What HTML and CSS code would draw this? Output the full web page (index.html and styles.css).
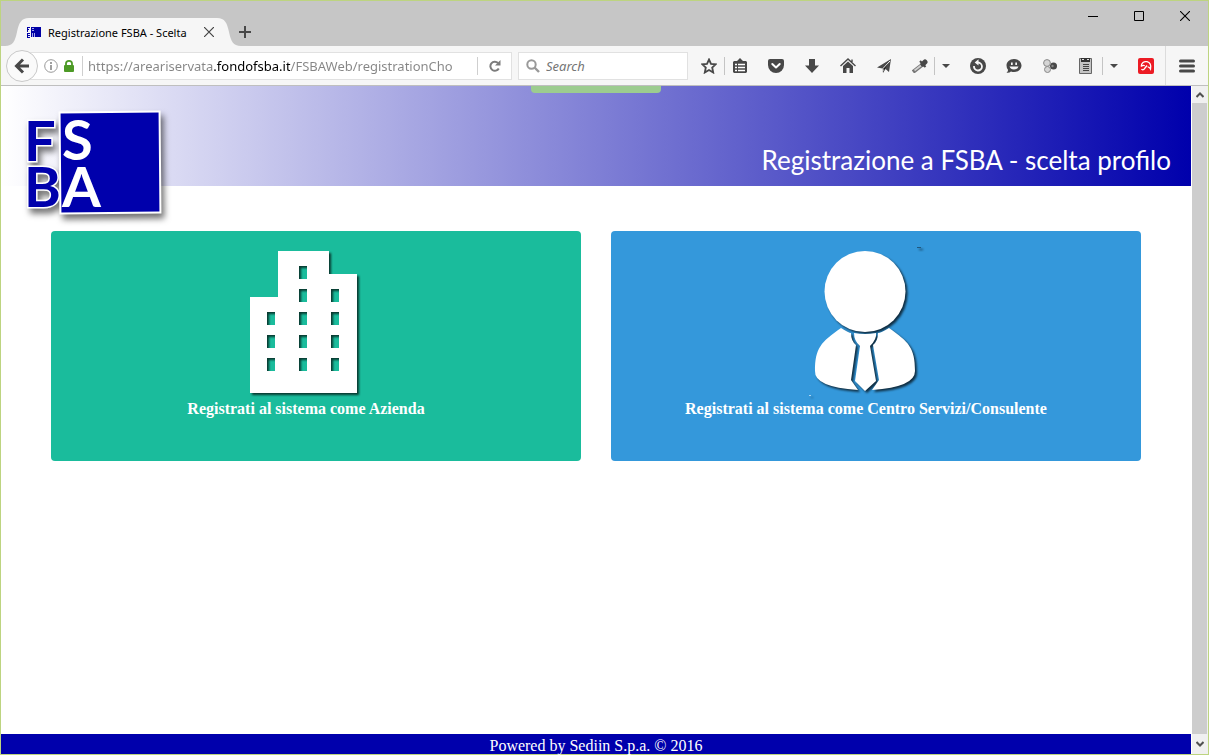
FILE: index.html
```html
<!DOCTYPE html>
<html lang="it">
<head>
<meta charset="utf-8">
<title>Registrazione FSBA - Scelta</title>
<link rel="stylesheet" href="styles.css">
</head>
<body>
<div class="window">
  <div class="tabstrip">
    <svg class="tab-edge" viewBox="0 0 24 28" width="24" height="28"><path d="M0 28C8 28 10 23 12 14C14 5 16 0 24 0V28Z"/></svg>
    <div class="tab">
      <svg class="favicon" viewBox="0 0 15 12" width="15" height="12"><path fill="#0000a5" d="M5 1h10v10H5z"/><path stroke="#0000a5" d="M1.500 1v5M1 1.500h3M1 3.500h2M1.500 7v5M1 7.500h3M1 9.500h3M1 11.500h3" /><path stroke="#a5a5ee" d="M6 2.500h2M6 4.500h2M6.500 7v4M8.500 7v4"/></svg>
      <span class="tab-title">Registrazione FSBA - Scelta</span>
      <button class="tab-close" aria-label="Close tab"><svg viewBox="0 0 10 10" width="10" height="10"><path stroke="#444" stroke-width="1.200" d="M0 0L10 10M10 0L0 10"/></svg></button>
    </div>
    <svg class="tab-edge flip" viewBox="0 0 24 28" width="24" height="28"><path d="M0 28C8 28 10 23 12 14C14 5 16 0 24 0V28Z"/></svg>
    <button class="new-tab" aria-label="New tab"><svg viewBox="0 0 12 12" width="12" height="12"><path stroke="#484848" stroke-width="2" d="M6 0V12M0 6H12"/></svg></button>
    <div class="window-controls">
      <button aria-label="Minimize"><svg viewBox="0 0 10 10" width="10" height="10"><path stroke="#000" d="M0 5.500H10"/></svg></button>
      <button aria-label="Maximize"><svg viewBox="0 0 10 10" width="10" height="10"><path fill="none" stroke="#000" d="M.5.5H9.500V9.500H.5Z"/></svg></button>
      <button aria-label="Close"><svg viewBox="0 0 10 10" width="10" height="10"><path stroke="#000" stroke-width="1.100" d="M0 0L10 10M10 0L0 10"/></svg></button>
    </div>
  </div>

  <div class="toolbar">
    <button class="back" aria-label="Back"><svg viewBox="0 0 16 16" width="16" height="16"><path fill="none" stroke="#484848" stroke-width="3" d="M9 1.500L2.500 8L9 14.500M3 8H15"/></svg></button>
    <div class="urlbar">
      <svg viewBox="0 0 14 14" width="14" height="14"><circle cx="7" cy="7" r="6.300" fill="none" stroke="#999"/><path stroke="#888" stroke-width="1.600" d="M7 3v2M7 6v5"/></svg>
      <svg viewBox="0 0 10 12" width="10" height="12"><path fill="none" stroke="#4d9a26" stroke-width="1.800" d="M2 6V3.500a3 2.600 0 0 1 6 0V6"/><rect y="5" width="10" height="7" rx="1" fill="#4d9a26"/></svg>
      <input class="url" type="text" aria-label="Address" value="https://areariservata.fondofsba.it/FSBAWeb/registrationChoose">
      <button class="reload" aria-label="Reload"><svg viewBox="0 0 12 12" width="12" height="12"><path fill="none" stroke="#7c7c7c" stroke-width="2" d="M9.800 8.500A4.500 4.500 0 1 1 9 3"/><path fill="#7c7c7c" d="M11.500 0V5.500H6Z"/></svg></button>
    </div>
    <div class="search">
      <svg viewBox="0 0 14 14" width="14" height="14"><circle cx="5.500" cy="5.500" r="4.200" fill="none" stroke="#999" stroke-width="2"/><path stroke="#999" stroke-width="2.400" d="M8.500 8.500L13 13"/></svg>
      <input type="text" aria-label="Search" placeholder="Search">
    </div>
    <div class="tools">
      <button class="narrow" aria-label="Bookmark"><svg viewBox="0 0 16 16" width="16" height="16"><path fill="none" stroke="#484848" stroke-width="1.800" d="M8 1.500L10 5.800L14.700 6.300L11.200 9.500L12.200 14.500L8 12L3.800 14.500L4.800 9.500L1.300 6.300L6 5.800Z"/></svg></button>
      <button class="narrow ruled" aria-label="Bookmarks list"><svg viewBox="0 0 14 16" width="14" height="16"><path fill="#484848" d="M1 3H4L7 0L10 3H13L14 4V14L13 15H1L0 14V4Z"/><path stroke="#fff" stroke-width="1.300" d="M2 6.500H4M5 6.500H12M2 9.500H4M5 9.500H12M2 12.500H4M5 12.500H12"/></svg></button>
      <button aria-label="Pocket"><svg viewBox="0 0 16 14" width="16" height="14"><path fill="#484848" d="M2 0H14Q16 0 16 2V6A8 8 0 0 1 0 6V2Q0 0 2 0Z"/><path fill="none" stroke="#fff" stroke-width="2" stroke-linecap="round" stroke-linejoin="round" d="M4.300 5L8 8.500L11.700 5"/></svg></button>
      <button aria-label="Downloads"><svg viewBox="0 0 14 14" width="14" height="14"><path fill="#484848" d="M4 0H10V6.500H14L7 14L0 6.500H4Z"/></svg></button>
      <button aria-label="Home"><svg viewBox="0 0 16 15" width="16" height="15"><path fill="none" stroke="#484848" stroke-width="1.400" d="M.5 8L8 1L15.500 8M12 1.500V4"/><path fill="#484848" d="M3 8L8 3.500L13 8V15H9.500V10H6.500V15H3Z"/></svg></button>
      <button aria-label="Send"><svg viewBox="0 0 14 14" width="14" height="14"><path fill="#484848" d="M14 0L12 13L8.500 10L6 14L5.500 9.500L0 8.500Z"/><path stroke="#f6f6f6" d="M13 2L6 9.500V12"/></svg></button>
      <button class="dropper" aria-label="Color picker"><svg viewBox="0 0 16 14" width="16" height="14"><path stroke="#777" stroke-width="4" d="M1 13L10 6"/><path stroke="#d0d0d0" stroke-width="1.600" d="M2.500 11.500L9 6.500"/><path stroke="#484848" stroke-width="5" stroke-linecap="round" d="M11 5L13 3"/><path stroke="#484848" stroke-width="2" d="M8 2L13.500 8"/></svg></button>
      <button class="caret ruled" aria-label="Color picker options"><svg viewBox="0 0 8 4" width="8" height="4"><path fill="#484848" d="M0 0H8L4 4Z"/></svg></button>
      <button aria-label="Restore"><svg viewBox="0 0 16 16" width="16" height="16"><circle cx="8" cy="8" r="8" fill="#484848"/><path fill="none" stroke="#f6f6f6" stroke-width="1.800" d="M4 8A4 4 0 1 0 8 4.500H6.500"/><path fill="#f6f6f6" d="M8.500 1.300V7.500L4.700 4.400Z"/></svg></button>
      <button aria-label="Chat"><svg viewBox="0 0 16 14" width="16" height="14"><path fill="#484848" d="M8 0C12.500 0 15.500 3 15.500 6.500S12.500 13 8 13Q6.500 13 5 12.500Q3.500 14 .5 13.700Q2.200 12.500 2 10.800Q.5 9 .5 6.500C.5 3 3.500 0 8 0Z"/><path fill="#f6f6f6" d="M5 3.500H6.700V6H5ZM9.300 3.500H11V6H9.300ZM3.500 7.500H12.500Q11.500 10.500 8 10.500T3.500 7.500Z"/></svg></button>
      <button aria-label="Share"><svg viewBox="0 0 14 14" width="14" height="14"><circle cx="10.500" cy="7" r="3.500" fill="#484848"/><g fill="#d5d5d5" stroke="#888"><circle cx="4" cy="4" r="3.400"/><circle cx="4.500" cy="10.500" r="3"/></g><circle cx="9.500" cy="7" r="1.200" fill="#888"/></svg></button>
      <button class="clip" aria-label="Clipboard"><svg viewBox="0 0 13 17" width="13" height="17"><path fill="#c4c4c4" stroke="#666" d="M.5 1.500H12.500V16.500H.5Z"/><path fill="#333" d="M2 1H11V5H2Z"/><path stroke="#ddd" d="M3 2.500H5M8 2.500H10"/><path stroke="#444" stroke-width="1.200" d="M4 7.500H10M4 9.500H10M4 11.500H10M4 13.500H10"/></svg></button>
      <button class="caret ruled" aria-label="Clipboard options"><svg viewBox="0 0 8 4" width="8" height="4"><path fill="#484848" d="M0 0H8L4 4Z"/></svg></button>
      <button class="antivirus" aria-label="Antivirus"><svg viewBox="0 0 16 16" width="16" height="16"><rect width="16" height="16" rx="2" fill="#ec1b24"/><path fill="none" stroke="#fff" stroke-width="1.300" d="M3.200 8.500C3.200 5 6 3 9 3.700C12 4.500 13.200 7.500 12.500 11Q11.500 8.800 9.700 8.800M3.200 8.500Q5 6.800 6.800 7.800M9 7.500L6 11.200Q4.500 12.500 3.500 11"/></svg></button>
      <button class="menu" aria-label="Menu"><svg viewBox="0 0 16 14" width="16" height="14"><path stroke="#484848" stroke-width="3" stroke-linecap="round" d="M1.500 2H14.500M1.500 7H14.500M1.500 12H14.500"/></svg></button>
    </div>
  </div>

  <div class="viewport">
    <div class="page">
      <header class="banner">
        <span class="pull"></span>
        <svg class="logo" viewBox="0 0 150 125" width="150" height="125" role="img" aria-label="FSBA">
          <rect class="logo-box" x="39" y="6" width="100" height="101" transform="rotate(-.5 89 57)"/>
          <text class="logo-ink" x="3" y="55">F</text>
          <text class="logo-ink" x="3" y="101">B</text>
          <text class="logo-paper" x="41" y="54">S</text>
          <text class="logo-paper" x="41" y="101">A</text>
        </svg>
        <h1>Registrazione a FSBA - scelta profilo</h1>
      </header>
      <main class="choices">
        <a class="card company" href="#azienda">
          <svg class="picture" viewBox="0 0 120 150" width="120" height="150"><path fill="#fff" fill-rule="evenodd" d="M4 51H32V5H83V28H111V147H4ZM53 20v13h8v-13zM53 43v13h8v-13zM53 66v13h8v-13zM53 89v13h8v-13zM53 112v13h8v-13zM85 43v13h8v-13zM85 66v13h8v-13zM85 89v13h8v-13zM85 112v13h8v-13zM21 66v13h8v-13zM21 89v13h8v-13zM21 112v13h8v-13z"/></svg>
          <span>Registrati al sistema come Azienda</span>
        </a>
        <a class="card consultant" href="#consulente">
          <svg class="picture" viewBox="0 0 120 150" width="120" height="150"><g fill="#fff"><circle cx="59" cy="45.500" r="40.500"/><path d="M35 82Q43 87 45 87Q45 95 50 99L45 134L52 144Q8 141 9 125C9 102 15 96 35 82Z"/><path d="M83 82Q75 87 72 87Q72 95 67 99L73 134L66 144Q109 141 109 125C109 102 103 96 83 82Z"/><path d="M48 87Q59 89 70 87Q71 93 64 100L70 135L59 145L49 135L54 100Q48 95 48 87Z"/></g><path stroke="#20577d" d="M111 1.500h4"/><path stroke="#fff" stroke-opacity=".6" d="M3 149.500h2"/></svg>
          <span>Registrati al sistema come Centro Servizi/Consulente</span>
        </a>
      </main>
      <footer class="footer">Powered by Sediin S.p.a. © 2016</footer>
    </div>
    <div class="scrollbar">
      <button aria-label="Scroll up"><svg viewBox="0 0 8 6" width="8" height="6"><path fill="none" stroke="#505050" stroke-width="2" d="M.5 5L4 1.500L7.500 5"/></svg></button>
      <div class="thumb"></div>
      <button class="down" aria-label="Scroll down"><svg viewBox="0 0 8 6" width="8" height="6"><path fill="none" stroke="#505050" stroke-width="2" d="M.5 1L4 4.500L7.500 1"/></svg></button>
    </div>
  </div>
</div>
</body>
</html>
```
FILE: styles.css
```css
* { box-sizing: border-box; }
body { margin: 0; }
button {
  display: flex; align-items: center; justify-content: center;
  margin: 0; padding: 0; border: 0; background: none; flex: none;
}
input { border: 0; padding: 0; outline: 0; background: none; min-width: 0; }
svg { display: block; flex: none; }

.window {
  display: flex; flex-direction: column; height: 100vh;
  border: 1px solid #bdd480; background: #fff;
}

.tabstrip {
  display: flex; align-items: flex-end; height: 45px; padding-left: 4px;
  background: #c6c6c6; flex: none;
}
.tab-edge { fill: #f6f6f6; }
.flip { transform: scaleX(-1); }
.tab {
  display: flex; align-items: center; width: 188px; height: 28px;
  background: #f6f6f6;
}
.favicon { margin-left: -3px; }
.tab-title {
  flex: 1; margin-left: 7px; white-space: nowrap;
  font: 11px "Noto Sans", sans-serif; color: #000;
}
.tab-close { width: 16px; height: 16px; }
.new-tab { width: 24px; height: 28px; margin-left: -8px; }
.window-controls { display: flex; align-self: flex-start; margin-left: auto; }
.window-controls button { width: 46px; height: 30px; }

.toolbar {
  display: flex; align-items: center; height: 40px; padding-left: 5px;
  background: #f6f6f6; border-bottom: 1px solid #bfbfbf; flex: none;
}
.back {
  z-index: 1; width: 32px; height: 32px; border: 1px solid #c9c9c9;
  border-radius: 50%; background: #fafafa;
}
.urlbar {
  display: flex; align-items: center; gap: 6px; flex: 1; min-width: 0;
  height: 28px; margin-left: -16px; padding-left: 21px;
  background: #fff; border: 1px solid #e1e1e1;
}
.url {
  flex: 1; height: 20px; margin-left: 2px; padding-left: 5px;
  border-left: 1px solid #cfcfcf;
  font: 13px "Noto Sans", sans-serif; color: #858585;
  background: linear-gradient(to right, #858585 131px, #000 131px, #000 207px, #858585 207px);
  -webkit-background-clip: text; background-clip: text;
  -webkit-text-fill-color: transparent;
}
.reload { width: 34px; height: 18px; margin-left: 18px; border-left: 1px solid #cfcfcf; }
.search {
  display: flex; align-items: center; gap: 6px; width: 170px; height: 28px;
  margin-left: 6px; padding-left: 7px; background: #fff; border: 1px solid #e1e1e1;
}
.search input { flex: 1; font: italic 13px "Noto Sans", sans-serif; }
.search input::placeholder { color: #757575; opacity: 1; }

.tools { display: flex; align-items: center; height: 100%; padding-left: 6px; flex: none; }
.tools button { width: 36px; height: 18px; }
.tools .narrow { width: 30px; }
.tools .narrow.ruled { width: 31px; margin-right: 3px; }
.tools .ruled { border-left: 1px solid #c4c4c4; }
.tools .dropper { width: 32px; padding-left: 3px; }
.tools .caret { width: 22px; margin-right: 4px; }
.tools .clip { width: 34px; }
.tools .antivirus { margin-right: 1px; }
.tools .menu { width: 43px; height: 100%; border-left: 1px solid #dcdcdc; }

.viewport { display: flex; flex: 1; min-height: 0; }
.page { display: flex; flex-direction: column; flex: 1; min-width: 0; }
.banner {
  position: relative; display: flex; justify-content: flex-end; align-items: flex-end;
  height: 100px; padding: 0 20px 10px; flex: none;
  background: linear-gradient(to right, #fff, #0000ac);
}
.banner h1 { margin: 0; font: 26px/32px Lato, sans-serif; color: #fff; }
.pull {
  position: absolute; top: 0; left: 50%; width: 130px; height: 7px; margin-left: -65px;
  background: #9ccc8f; border-radius: 0 0 4px 4px;
}
.logo {
  position: absolute; top: 20px; left: 20px; overflow: visible;
  font: bold 56px Lato, sans-serif;
  filter: drop-shadow(3px 5px 3px rgba(0, 0, 0, .55));
}
.logo-box { fill: #0000ac; stroke: #fff; stroke-width: 2; }
.logo-ink { fill: #0000ac; stroke: #fff; stroke-width: 3; paint-order: stroke; }
.logo-paper { fill: #fff; }

.choices { display: flex; gap: 30px; padding: 45px 50px; flex: 1; align-items: flex-start; }
.card {
  display: flex; flex-direction: column; align-items: center; flex: 1;
  height: 230px; padding: 15px 20px 0 0; border-radius: 4px;
  font: bold 16px/26px "Liberation Serif", serif; color: #fff; text-decoration: none;
}
.company { background: #1abc9c; }
.consultant { background: #3498db; }
.picture { filter: drop-shadow(2px 2px 1px rgba(0, 0, 0, .7)); }
.footer {
  height: 20px; background: #0000ac; color: #fff; text-align: center; flex: none;
  font: 16px/24px "Liberation Serif", serif;
}
.scrollbar {
  display: flex; flex-direction: column; width: 16px; margin-left: 1px;
  background: #f0f0f0; padding-right: 1px; flex: none;
}
.scrollbar button { height: 17px; }
.scrollbar .down { height: 20px; }
.thumb { flex: 1; background: #cdcdcd; }
```
